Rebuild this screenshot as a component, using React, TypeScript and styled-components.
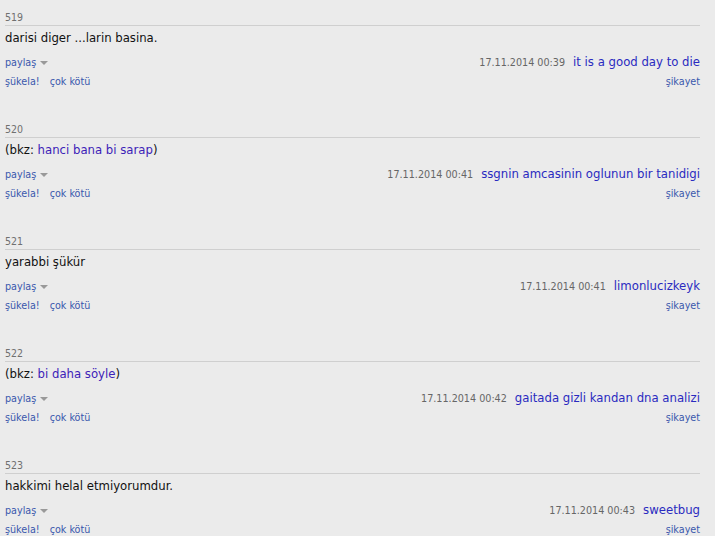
import styled, { createGlobalStyle } from "styled-components"

const GlobalStyle = createGlobalStyle`
	html, body {
		margin: 0;
		padding: 0;
		background: #ebebeb;
	}
	body {
		font-family: "DejaVu Sans Condensed", "DejaVu Sans", sans-serif;
		overflow: hidden;
	}
`

type Part = { text: string; bkz?: boolean }

type Entry = {
	id: number
	parts: Part[]
	date: string
	author: string
}

const entries: Entry[] = [
	{ id: 519, parts: [{ text: "darisi diger ...larin basina." }], date: "17.11.2014 00:39", author: "it is a good day to die" },
	{
		id: 520,
		parts: [{ text: "(bkz: " }, { text: "hanci bana bi sarap", bkz: true }, { text: ")" }],
		date: "17.11.2014 00:41",
		author: "ssgnin amcasinin oglunun bir tanidigi",
	},
	{ id: 521, parts: [{ text: "yarabbi şükür" }], date: "17.11.2014 00:41", author: "limonlucizkeyk" },
	{
		id: 522,
		parts: [{ text: "(bkz: " }, { text: "bi daha söyle", bkz: true }, { text: ")" }],
		date: "17.11.2014 00:42",
		author: "gaitada gizli kandan dna analizi",
	},
	{ id: 523, parts: [{ text: "hakkimi helal etmiyorumdur." }], date: "17.11.2014 00:43", author: "sweetbug" },
]

const List = styled.ol`
	list-style: none;
	margin: 0;
	padding: 0 15px 0 5px;
`

const Item = styled.li`
	padding-top: 11px;
	height: 101px;
`

const Number = styled.div`
	font-size: 10.5px;
	color: #707070;
	line-height: 12px;
	padding-bottom: 2px;
	border-bottom: 1px solid #cfcfcf;
`

const Content = styled.div`
	font-size: 13px;
	line-height: 16px;
	color: #111;
	margin-top: 4px;
`

const Bkz = styled.a`
	color: #3d22b8;
	text-decoration: none;
`

const MetaRow = styled.div<{ $top: number }>`
	display: flex;
	align-items: baseline;
	justify-content: space-between;
	margin-top: ${(p) => p.$top}px;
`

const SmallLink = styled.a`
	font-size: 10.7px;
	color: #3a58ad;
	text-decoration: none;
`

const Share = styled(SmallLink)`
	display: inline-flex;
	align-items: center;
	gap: 4px;
`

const Caret = styled.span`
	width: 0;
	height: 0;
	border-left: 4px solid transparent;
	border-right: 4px solid transparent;
	border-top: 4px solid #999;
	margin-top: 1px;
`

const Signature = styled.div`
	display: flex;
	align-items: baseline;
	gap: 8px;
`

const Date = styled.span`
	font-size: 10.7px;
	color: #666;
`

const Author = styled.a`
	font-size: 13px;
	color: #2a2ac0;
	text-decoration: none;
`

const Votes = styled.div`
	display: flex;
	gap: 10px;
`

export default function App() {
	return (
		<>
			<GlobalStyle />
			<List>
				{entries.map((e) => (
					<Item key={e.id}>
						<Number>{e.id}</Number>
						<Content>
							{e.parts.map((p, i) => (p.bkz ? <Bkz key={i}>{p.text}</Bkz> : <span key={i}>{p.text}</span>))}
						</Content>
						<MetaRow $top={8}>
							<Share>
								paylaş <Caret />
							</Share>
							<Signature>
								<Date>{e.date}</Date>
								<Author>{e.author}</Author>
							</Signature>
						</MetaRow>
						<MetaRow $top={6}>
							<Votes>
								<SmallLink>şükela!</SmallLink>
								<SmallLink>çok kötü</SmallLink>
							</Votes>
							<SmallLink>şikayet</SmallLink>
						</MetaRow>
					</Item>
				))}
			</List>
		</>
	)
}
